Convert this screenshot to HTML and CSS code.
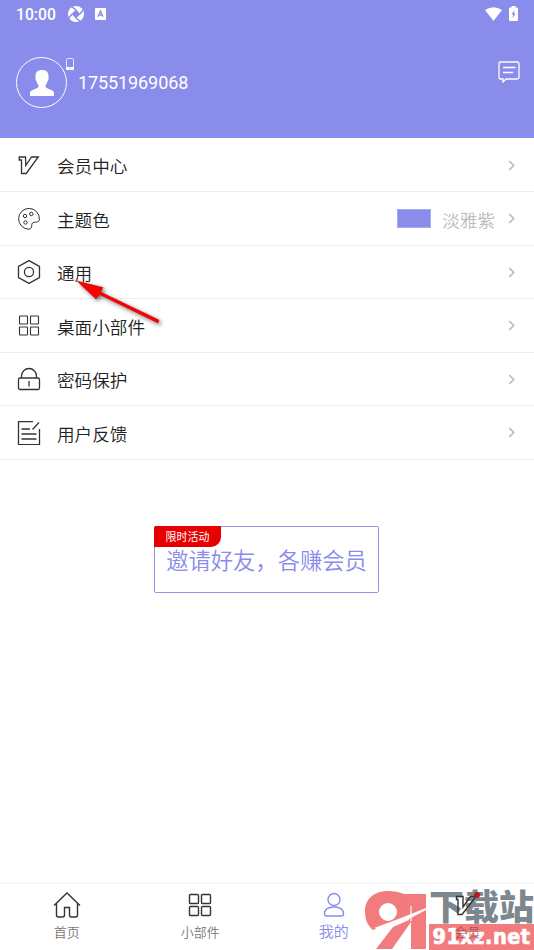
FILE: index.html
```html
<!DOCTYPE html>
<html lang="zh-CN">
<head>
<meta charset="utf-8">
<title>我的</title>
<link rel="stylesheet" href="styles.css">
</head>
<body>
<div class="screen">
  <header class="header">
    <div class="status">
      <span class="time">10:00</span>
      <svg class="status-sync" width="16" height="16" viewBox="0 0 16 16"><circle cx="8" cy="8" r="8" fill="#fff"/><path d="M8 3.500 12.500 8 8 12.500 3.500 8z" fill="#898cea"/><path d="M8 4 3 0M12 8l4-5M8 12l5 4M4 8l-4 5" stroke="#898cea" stroke-width="1.500"/></svg>
      <svg class="status-app" width="11" height="12" viewBox="0 0 11 12"><rect width="11" height="12" rx="1" fill="#fff"/><path d="M3 8.800 5.500 3 8 8.800M4 7h3" fill="none" stroke="#898cea" stroke-width="1.300"/></svg>
      <span class="grow"></span>
      <svg class="status-wifi" width="17" height="14" viewBox="0 0 17 14"><path d="M0 3Q8.500-2.700 17 3L8.500 14z" fill="#fff"/></svg>
      <svg width="9" height="15" viewBox="0 0 9 15"><path d="M2.500 1.500V0h4v1.500H8q1 0 1 1V14q0 1-1 1H1q-1 0-1-1V2.500q0-1 1-1z" fill="#fff"/><path d="M5.500 4 2.500 8.500h1.700L3.500 12.500l3-5H4.900z" fill="#898cea"/></svg>
    </div>
    <div class="profile">
      <div class="avatar">
        <svg width="24" height="26" viewBox="0 0 24 26"><path d="M12 0C8 0 5.500 2 5.500 6c0 2-.3 2 .2 4 .3 1 .8 1 1 2 .4 2 1.800 2.500 1.800 4.500 0 2.500-7.500 2.500-8.500 6V26h24v-3.500c-1-3.500-8.500-3.500-8.500-6 0-2 1.400-2.500 1.800-4.500.2-1 .7-1 1-2 .5-2 .2-2 .2-4 0-4-2.500-6-6.500-6z" fill="#fff"/></svg>
      </div>
      <svg class="device" width="8" height="12" viewBox="0 0 8 12"><rect x=".5" y=".5" width="7" height="11" rx="1" fill="none" stroke="#e3e4fc"/><path d="M0 9h8v2q0 1-1 1H1q-1 0-1-1z" fill="#fff"/><circle cx="4" cy="10.500" r=".6" fill="#898cea"/></svg>
      <span class="phone">17551969068</span>
      <svg class="message" width="22" height="22" viewBox="0 0 22 22" fill="none" stroke="#fff" stroke-width="1.300"><path d="M3 1h16q2 0 2 1.500v14q0 1.500-2 1.500H8l-3 3V18H3q-2 0-2-1.500v-14Q1 1 3 1zM5 6.500h12.500M5 11.500h10"/></svg>
    </div>
  </header>

  <main class="menu">
    <div class="row">
      <svg class="icon" viewBox="0 0 24 24"><path d="M2.200 4h6.300l.3 8.500L14.500 4h6.800L9.200 20.500H4.500V7H2.200z"/></svg>
      <span class="label">会员中心</span><svg class="chevron" viewBox="0 0 6 10"><path d="m1 1 4 4-4 4"/></svg>
    </div>
    <div class="row">
      <svg class="icon palette" viewBox="0 0 24 24"><path d="M12 22.200A10.400 10.400 0 1 1 22.400 12c0 2-1 3-3 3-3.500.2-4.700 1-4.700 3.500 0 2-.6 3.700-2.700 3.700z"/><circle cx="8" cy="9" r="1.700"/><circle cx="14.300" cy="7" r="1.700"/><circle cx="8.500" cy="15.500" r="1.700"/></svg>
      <span class="label">主题色</span><span class="swatch"></span><span class="value">淡雅紫</span><svg class="chevron" viewBox="0 0 6 10"><path d="m1 1 4 4-4 4"/></svg>
    </div>
    <div class="row">
      <svg class="icon" viewBox="0 0 24 24"><path d="m12 .6 10.500 5.900v11L12 23.400 1.500 17.500v-11z"/><circle cx="12" cy="12" r="4.600"/></svg>
      <span class="label">通用</span><svg class="chevron" viewBox="0 0 6 10"><path d="m1 1 4 4-4 4"/></svg>
    </div>
    <div class="row">
      <svg class="icon grid" viewBox="0 0 24 24"><rect x="2.500" y="2" width="8" height="8" rx=".5"/><rect x="13.500" y="2" width="8" height="8" rx=".5"/><rect x="2.500" y="13" width="8" height="8" rx=".5"/><rect x="13.500" y="13" width="8" height="8" rx=".5"/></svg>
      <span class="label">桌面小部件</span><svg class="chevron" viewBox="0 0 6 10"><path d="m1 1 4 4-4 4"/></svg>
    </div>
    <div class="row">
      <svg class="icon" viewBox="0 0 24 24"><rect x="1.500" y="11" width="21" height="11.500" rx="1.500"/><path d="M4.500 11V9a7.500 7.500 0 0 1 15 0v2M12 14v5.500"/></svg>
      <span class="label">密码保护</span><svg class="chevron" viewBox="0 0 6 10"><path d="m1 1 4 4-4 4"/></svg>
    </div>
    <div class="row">
      <svg class="icon" viewBox="0 0 24 24"><path d="M16 .6H1.500v23h21V8M22 1.500l-6.500 7M4.500 8H13M4.500 13h15M4.500 18h15"/></svg>
      <span class="label">用户反馈</span><svg class="chevron" viewBox="0 0 6 10"><path d="m1 1 4 4-4 4"/></svg>
    </div>
    <svg class="pointer" width="100" height="60" viewBox="0 0 100 60"><path d="m1 7 26 6.500-2.500 4.500L83 46l-1 3L23.500 20.500 20 25z" fill="#fb0000" stroke="#c00" stroke-width=".5"/></svg>
  </main>

  <section class="invite">
    <span class="tag">限时活动</span>
    <span class="invite-text">邀请好友，各赚会员</span>
  </section>

  <nav class="tabs">
    <div class="tab">
      <svg class="tab-icon" viewBox="0 0 28 26"><path d="M1 13.500 14 1l13 12.500M3.500 11.500V23q0 2 2 2h4q2 0 2-2v-7.500h5V23q0 2 2 2h4q2 0 2-2V11.500"/></svg>
      <span>首页</span>
    </div>
    <div class="tab">
      <svg class="tab-icon" viewBox="0 0 28 26"><rect x="3.500" y="2.500" width="9" height="9" rx="1"/><rect x="15.500" y="2.500" width="9" height="9" rx="1"/><rect x="3.500" y="14.500" width="9" height="9" rx="1"/><rect x="15.500" y="14.500" width="9" height="9" rx="1"/></svg>
      <span>小部件</span>
    </div>
    <div class="tab active">
      <svg class="tab-icon" viewBox="0 0 28 26"><circle cx="14" cy="7.500" r="6"/><path d="M4.500 22c0-5 4-7 9.500-7s9.500 2 9.500 7q0 2-2 2h-15q-2 0-2-2z"/></svg>
      <span>我的</span>
    </div>
    <div class="tab vip">
      <svg class="tab-icon" viewBox="0 0 28 26"><path d="M3.500 4.500H10V15l7.500-10.500H23L9 22.500H5V7.500H3.500z"/><circle cx="24" cy="3" r="3" fill="#ba1822" stroke="none"/></svg>
      <span>会员</span>
    </div>
  </nav>

  <div class="watermark">
    <svg class="mark" width="64" height="60" viewBox="0 0 64 60"><g fill="#f17b7d"><path fill-rule="evenodd" d="M24 1C9 1 1 10 1 21c0 9 3 15 8 19l38-15V9L40 4Q33 1 24 1zm0 12a9 9 0 1 1 0 18 9 9 0 0 1 0-18z"/><path d="M40 4h22v55H47V32L28 59H12l17-22 16-7z"/></g><path d="m10 38 27-10 25-10v2L41 31l-24 9z" fill="#fff"/><path d="M47 16v15" stroke="#fff" stroke-width="1.200"/></svg>
    <div class="site">
      <div class="site-name">下载站</div>
      <div class="site-url">91xz.net</div>
    </div>
  </div>
</div>
</body>
</html>
```
FILE: styles.css
```css
* { box-sizing: border-box; }

body {
  margin: 0;
  background: #fff;
  color: #222;
  font-family: Roboto, "Noto Sans CJK SC", sans-serif;
}

svg { display: block; flex: none; }

.screen {
  position: relative;
  display: flex;
  flex-direction: column;
  width: 534px;
  height: 950px;
  overflow: hidden;
}

.header { height: 138px; background: #898cea; color: #fff; }

.status { display: flex; align-items: center; height: 27px; padding: 0 16px; }
.time { width: 52px; font-size: 15.7px; font-weight: 500; padding-top: 1px; }
.status-app { margin-left: 11px; }
.status-wifi { margin-right: 7px; }
.grow { flex: 1; }

.profile { display: flex; height: 111px; padding: 30px 14px 0 16px; }
.avatar {
  display: flex;
  align-items: center;
  justify-content: center;
  width: 51px;
  height: 51px;
  border: 1.5px solid #fff;
  border-radius: 50%;
}
.device { margin: 1px 4px 0 -1px; }
.phone { flex: 1; line-height: 51px; font-size: 18px; letter-spacing: -.1px; }
.message { margin-top: 4px; }

.menu { position: relative; padding-top: .5px; }
.row {
  display: flex;
  align-items: center;
  height: 53.5px;
  padding: 1px 19px 0 17px;
  border-bottom: 1px solid #eee;
}
.icon { width: 24px; height: 24px; fill: none; stroke: #333; stroke-width: 1.3; }
.grid { stroke-width: 1.1; }
.palette { stroke-width: 1; }
.label {
  flex: 1;
  margin-left: 16px;
  padding-top: 1px;
  font-size: 17.6px;
  font-weight: 350;
}
.swatch { width: 34px; height: 19px; background: #898cea; border: 1px solid #a9abf0; }
.value { margin: 0 13px 0 11px; padding-top: 1px; color: #bbb; font-size: 17.6px; font-weight: 350; }
.chevron { width: 7px; height: 11px; fill: none; stroke: #bbb; stroke-width: 1.5; }

.pointer {
  position: absolute;
  left: 76px;
  top: 136px;
  filter: drop-shadow(2px 2px 2px rgba(0, 0, 0, .55));
}

.invite {
  position: relative;
  align-self: center;
  left: -.5px;
  display: flex;
  justify-content: center;
  width: 225px;
  height: 67px;
  margin-top: 66.5px;
  border: 1.5px solid #9395ec;
  border-radius: 2px;
}
.tag {
  position: absolute;
  left: -1px;
  top: -1px;
  width: 67px;
  height: 21px;
  background: #e60000;
  border-radius: 2px 0 10px 0;
  color: #fff;
  font-size: 11px;
  line-height: 24px;
  text-align: center;
}
.invite-text { color: #898cea; font-size: 22.3px; font-weight: 350; line-height: 69px; white-space: nowrap; }

.tabs {
  display: flex;
  height: 68px;
  margin-top: auto;
  border-top: 2px solid #f7f7f7;
}
.tab {
  flex: 1;
  display: flex;
  flex-direction: column;
  align-items: center;
  padding-top: 8px;
  color: #777;
  font-size: 13px;
  font-weight: 350;
}
.tab span { margin-top: 4px; line-height: 22px; }
.tab-icon { width: 28px; height: 26px; fill: none; stroke: #333; stroke-width: 1.4; }
.tab.active { color: #898cea; font-size: 15px; }
.tab.active span { margin-top: 3px; }
.active .tab-icon { stroke: #898cea; }
.tab.vip { position: relative; z-index: 2; color: rgba(80, 50, 50, .5); }

.watermark { position: absolute; z-index: 1; left: 364px; bottom: 0; display: flex; width: 170px; height: 60px; }
.mark { margin-right: 1px; }
.site { flex: 1; background: #fff; }
.site-name {
  height: 34px;
  color: #7d878e;
  font-size: 35px;
  font-weight: 900;
  line-height: 37px;
  white-space: nowrap;
}
.site-url {
  height: 26px;
  background: #f17b7d;
  color: #fff;
  font-family: "DejaVu Sans Condensed", "DejaVu Sans", sans-serif;
  font-size: 21.5px;
  font-weight: 700;
  line-height: 25px;
  letter-spacing: .5px;
  text-align: center;
  -webkit-text-stroke: .7px #fff;
}
```
